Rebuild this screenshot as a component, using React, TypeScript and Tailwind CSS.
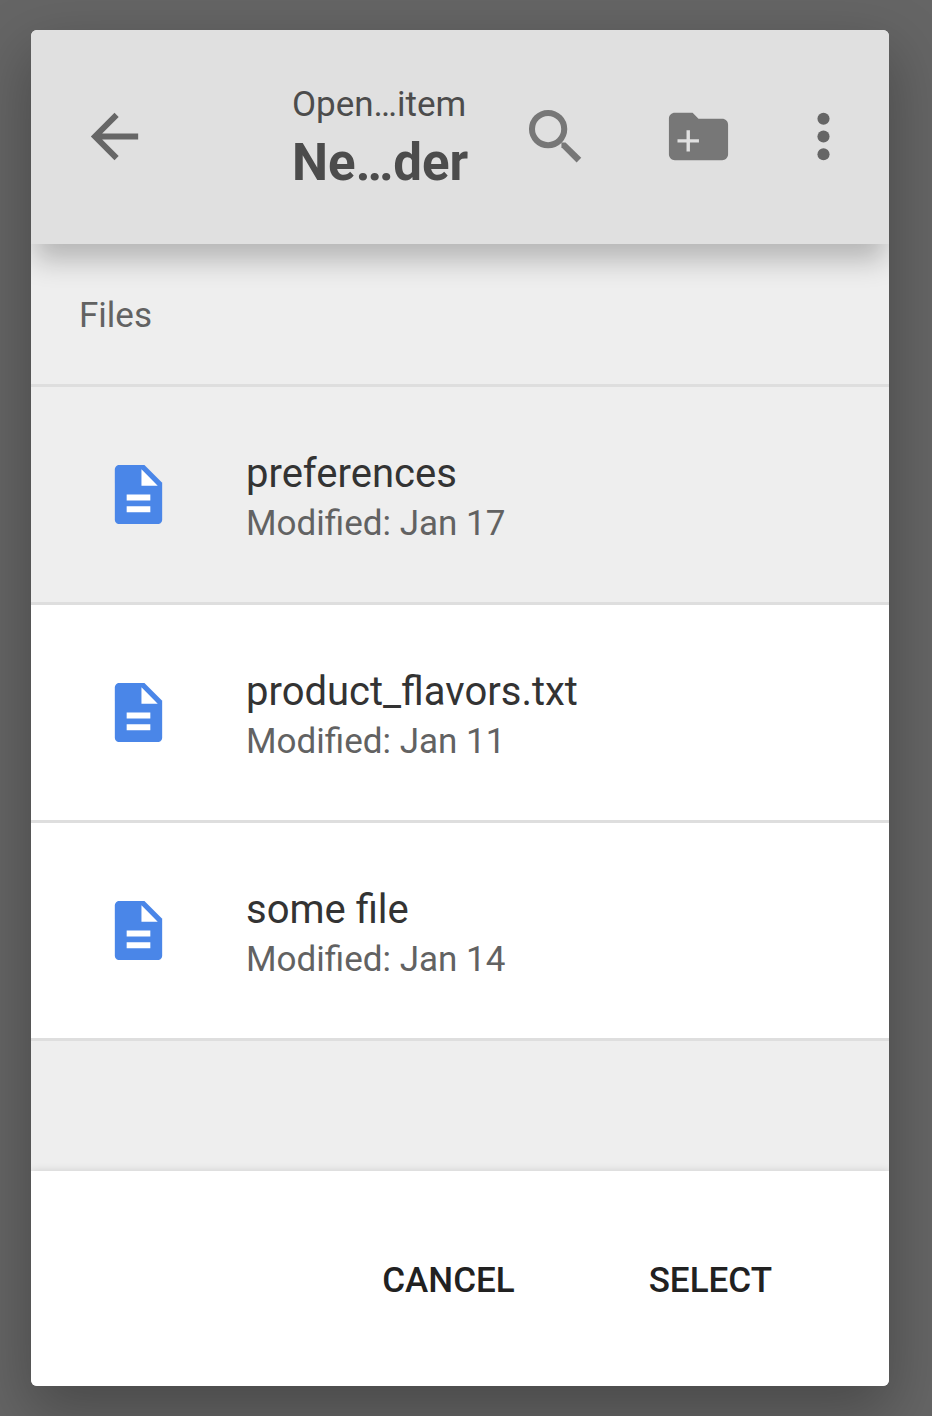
import type { ReactNode } from "react";

const files = [
  { name: "preferences", modified: "Jan 17", tone: "bg-[#eeeeee]" },
  { name: "product_flavors.txt", modified: "Jan 11", tone: "bg-white" },
  { name: "some file", modified: "Jan 14", tone: "bg-white" },
];

function Icon({ children, className }: { children: ReactNode; className: string }) {
  return (
    <svg viewBox="0 0 24 24" aria-hidden="true" className={`size-[71px] shrink-0 ${className}`}>
      {children}
    </svg>
  );
}

function IconButton({ label, children }: { label: string; children: ReactNode }) {
  return (
    <button type="button" aria-label={label} className="shrink-0">
      {children}
    </button>
  );
}

export default function App() {
  return (
    <div className="flex min-h-screen flex-col bg-[#656565] pt-[30px] pr-[43px] pb-[30px] pl-[31px] font-['Roboto',sans-serif]">
      <main className="flex flex-1 flex-col overflow-hidden rounded-md bg-[#eeeeee] shadow-[0_24px_60px_4px_rgba(0,0,0,0.27)]">
        <header className="relative flex h-[214px] shrink-0 items-center bg-[#e0e0e0] pr-[30px] pb-px pl-12 shadow-[0_20px_26px_-4px_rgba(0,0,0,0.24)]">
          <IconButton label="Back">
            <Icon className="fill-[#666666]">
              <path d="M20 11H7.83l5.59-5.59L12 4l-8 8 8 8 1.41-1.41L7.83 13H20v-2z" />
            </Icon>
          </IconButton>
          <div className="ml-[142px] min-w-0 flex-1 pt-1 whitespace-nowrap text-[#4c4c4c]">
            <p className="text-[35px] leading-[48px]">Open…item</p>
            <h1 className="text-[51px] leading-[68px] font-bold">Ne…der</h1>
          </div>
          <div className="flex items-center">
            <IconButton label="Search">
              <Icon className="fill-[#777777]">
                <circle cx="9.500" cy="9.500" r="5.450" fill="none" stroke="#777777" strokeWidth="2.050" />
                <path d="M14 14h1.400l5.300 5.200-1.550 1.550L14 15.600z" />
              </Icon>
            </IconButton>
            <span className="w-[72px]" />
            <IconButton label="New folder">
              <Icon className="fill-[#777777]">
                <path d="M10 4H4c-1.100 0-2 .9-2 2v12c0 1.100.9 2 2 2h16c1.100 0 2-.9 2-2V8c0-1.100-.9-2-2-2h-8z" />
                <path d="M7.950 9.900h1.150v3h3.050v1.150H9.100v3H7.950v-3H4.900V12.900h3.050z" className="fill-[#e0e0e0]" />
              </Icon>
            </IconButton>
            <span className="w-[54px]" />
            <IconButton label="More options">
              <Icon className="fill-[#666666]">
                <circle cx="12" cy="6" r="2.050" />
                <circle cx="12" cy="12" r="2.050" />
                <circle cx="12" cy="18" r="2.050" />
              </Icon>
            </IconButton>
          </div>
        </header>

        <section className="flex-1">
          <h2 className="flex h-[143px] items-center border-b-[3px] border-[#dedede] px-12 pt-1 text-[35px] text-[#626262]">
            Files
          </h2>
          <ul>
            {files.map((file) => (
              <li key={file.name} className={`border-b-[3px] border-[#dedede] ${file.tone}`}>
                <a href="#" className="flex h-[215px] items-center gap-[72px] px-[72px]">
                  <Icon className="fill-[#4a86e8]">
                    <path d="M5.500 2H14l6 6v12.500c0 .8-.7 1.500-1.500 1.500h-13C4.700 22 4 21.300 4 20.500v-17C4 2.700 4.700 2 5.500 2z" />
                    <path d="M13 3.500V9h5.500zM8 12h8v2H8zM8 16h8v2H8z" className="fill-white" />
                  </Icon>
                  <div className="min-w-0 pt-1">
                    <p className="truncate text-[40px] leading-[54px] text-[#333333]">{file.name}</p>
                    <p className="text-[35px] leading-[46px] text-[#626262]">Modified: {file.modified}</p>
                  </div>
                </a>
              </li>
            ))}
          </ul>
        </section>

        <footer className="flex h-[215px] shrink-0 items-center justify-end gap-[86px] bg-white pt-1.5 pr-[93px] text-[35px] font-medium text-[#212121] shadow-[0_0_8px_rgba(0,0,0,0.14)]">
          <button type="button" className="px-6 uppercase">Cancel</button>
          <button type="button" className="px-6 uppercase">Select</button>
        </footer>
      </main>
    </div>
  );
}
